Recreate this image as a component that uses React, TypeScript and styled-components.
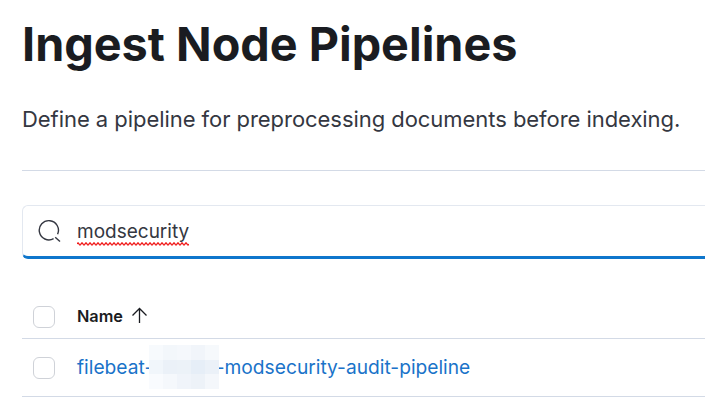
import styled, { createGlobalStyle } from 'styled-components';

const GlobalStyle = createGlobalStyle`
  html, body {
    margin: 0;
    padding: 0;
    background: #fff;
    overflow: hidden;
  }
  body {
    font-family: Inter, "Liberation Sans", sans-serif;
  }
`;

// blocks of the pixelated patch over the pipeline name, row by row
const mosaic = [
  '#f7fafd', '#f3f7fb', '#f5f8fc', '#f1f5fa', '#f6f9fc',
  '#f1f6fb', '#ebf1f8', '#ecf2f8', '#e6eef7', '#ebf1f8',
  '#f9fbfe', '#f5f8fc', '#f0f4fa', '#edf2f8', '#f4f7fb',
];

export default function App() {
  return (
    <>
      <GlobalStyle />
      <Page>
        <Title>Ingest Node Pipelines</Title>
        <Description>Define a pipeline for preprocessing documents before indexing.</Description>
        <Rule />
        <SearchBox>
          <svg width="24" height="24" viewBox="0 0 24 24" fill="none" stroke="#343741" strokeWidth="1.4">
            <path d="M15.6 19.6 A9.6 9.6 0 1 1 19.6 15.2" />
            <path d="M17.2 18.2 L22 22.6" />
          </svg>
          <SearchText>
            modsecurity
            <SpellMark width="112" height="4" viewBox="0 0 112 4" fill="none" stroke="#f01818" strokeWidth="1.3">
              <path d={'M0 2 q1 -2 2 0 ' + 't2 0 '.repeat(55)} />
            </SpellMark>
          </SearchText>
        </SearchBox>
        <HeaderRow>
          <Check />
          <HeaderName>Name</HeaderName>
          <SortArrow width="17" height="17" viewBox="0 0 17 17" fill="none" stroke="#1a1c21" strokeWidth="1.3">
            <path d="M8.5 16 V1.5 M1.5 8.5 L8.5 1.5 L15.5 8.5" />
          </SortArrow>
        </HeaderRow>
        <Row>
          <Check />
          <PipelineLink>
            filebeat-
            <Redacted>
              <Patch>
                {mosaic.map((color, i) => (
                  <Block key={i} $color={color} />
                ))}
              </Patch>
            </Redacted>
            -modsecurity-audit-pipeline
          </PipelineLink>
        </Row>
      </Page>
    </>
  );
}

const Page = styled.div`
  width: 705px;
  height: 419px;
  overflow: hidden;
  padding: 16px 0 0 22px;
  box-sizing: border-box;
`;
const Title = styled.h1`
  margin: 0;
  font-size: 46.75px;
  line-height: 56px;
  font-weight: 700;
  color: #1a1c21;
  white-space: nowrap;
`;
const Description = styled.p`
  margin: 31px 0 0;
  font-size: 22px;
  line-height: 32px;
  letter-spacing: -0.05px;
  color: #343741;
  white-space: nowrap;
`;
const Rule = styled.div`
  height: 1px;
  margin-top: 35px;
  background: #d3dae6;
`;
const SearchBox = styled.div`
  display: flex;
  align-items: center;
  gap: 15px;
  height: 54px;
  margin-top: 34px;
  padding-left: 15px;
  box-sizing: border-box;
  border: 1px solid #e3e8f0;
  border-right: 0;
  border-bottom: 3px solid #0f76cc;
  border-radius: 6px 0 0 6px;
`;
const SearchText = styled.span`
  position: relative;
  margin-top: 1px;
  font-size: 19px;
  color: #343741;
`;
const SpellMark = styled.svg`
  position: absolute;
  left: 0;
  bottom: -3px;
`;
const HeaderRow = styled.div`
  display: flex;
  align-items: center;
  height: 43px;
  margin-top: 36px;
  border-bottom: 1px solid #d3dae6;
`;
const Row = styled.div`
  display: flex;
  align-items: center;
  height: 58px;
  border-bottom: 1px solid #d3dae6;
  box-sizing: border-box;
`;
const Check = styled.span`
  width: 22px;
  height: 22px;
  margin: 0 22px 0 11px;
  box-sizing: border-box;
  border: 1px solid #cfd2d8;
  border-radius: 6px;
  background: #fff;
`;
const HeaderName = styled.span`
  font-size: 16.3px;
  font-weight: 600;
  color: #1a1c21;
  margin: 0 8px 2px 0;
`;
const SortArrow = styled.svg`
  margin-bottom: 3px;
`;
const PipelineLink = styled.span`
  margin-bottom: 1px;
  font-size: 19.2px;
  color: #1a73c9;
  white-space: nowrap;
`;
const Redacted = styled.span`
  position: relative;
  display: inline-block;
  width: 62.5px;
  height: 1px;
  vertical-align: middle;
`;
const Patch = styled.span`
  position: absolute;
  left: -4px;
  top: -23px;
  width: 70px;
  height: 44px;
  display: grid;
  grid-template-columns: repeat(5, 1fr);
  grid-template-rows: 15px 14px 15px;
`;
const Block = styled.span<{ $color: string }>`
  background: ${({ $color }) => $color};
`;
